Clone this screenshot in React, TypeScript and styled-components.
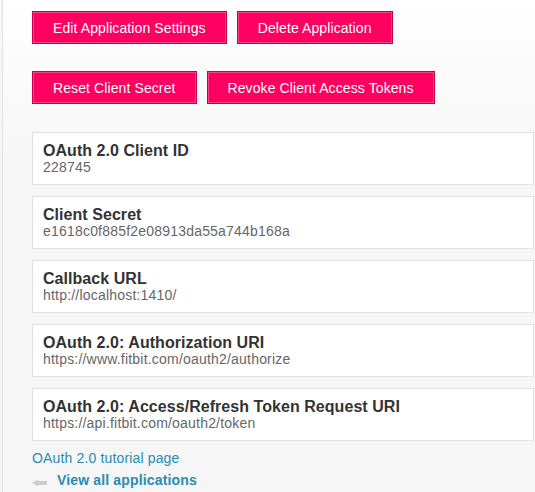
import styled, { createGlobalStyle } from "styled-components"

const GlobalStyle = createGlobalStyle`
    html, body {
        margin: 0;
        padding: 0;
        background: #f6f6f6;
    }
    body {
        font-family: "Liberation Sans", Arial, sans-serif;
    }
`
const Page = styled.div`
    min-height: 492px;
    margin-left: 2px;
    border-left: 1px solid #e2e2e2;
    padding: 11px 1px 0 29px;
    background: linear-gradient(#ffffff 0, #f6f6f6 160px);
    box-sizing: border-box;
`
const ButtonRow = styled.div<{ $last?: boolean }>`
    display: flex;
    gap: 10px;
    margin-bottom: ${props => (props.$last ? "0" : "27px")};
`
const PinkButton = styled.button`
    height: 33px;
    padding: 0 20px;
    background: #ff0060;
    border: 1px solid #c40048;
    box-shadow: inset 0 0 0 1px rgba(255, 255, 255, 0.25);
    color: #fff;
    font-family: "Liberation Sans", Arial, sans-serif;
    font-size: 14px;
    letter-spacing: 0.1px;
    cursor: pointer;
`
const CardList = styled.div`
    display: flex;
    flex-direction: column;
    gap: 11px;
    margin-top: 28px;
`
const Card = styled.div`
    background: #fff;
    border: 1px solid #e2e2e2;
    padding: 9px 10px;
`
const Label = styled.div`
    font-size: 16px;
    line-height: 18px;
    font-weight: bold;
    letter-spacing: 0.05px;
    color: #333;
`
const Value = styled.div`
    font-size: 14px;
    line-height: 15px;
    letter-spacing: 0.2px;
    color: #666;
`
const Links = styled.div`
    margin-top: 8px;
    display: flex;
    flex-direction: column;
    gap: 4px;
`
const TextLink = styled.a<{ $bold?: boolean }>`
    display: flex;
    align-items: center;
    gap: 10px;
    font-size: 14px;
    line-height: 18px;
    letter-spacing: 0.15px;
    font-weight: ${props => (props.$bold ? "bold" : "normal")};
    color: #2a8cb2;
    text-decoration: none;
`
const BackArrow = () => (
    <svg width="15" height="8" viewBox="0 0 15 8" style={{ marginTop: 5 }}>
        <path d="M0 4 L6 0.5 L6 2 L15 2 L15 6 L6 6 L6 7.5 Z" fill="#cccccc" />
    </svg>
)

const fields = [
    { label: "OAuth 2.0 Client ID", value: "228745" },
    { label: "Client Secret", value: "e1618c0f885f2e08913da55a744b168a" },
    { label: "Callback URL", value: "http://localhost:1410/" },
    { label: "OAuth 2.0: Authorization URI", value: "https://www.fitbit.com/oauth2/authorize" },
    { label: "OAuth 2.0: Access/Refresh Token Request URI", value: "https://api.fitbit.com/oauth2/token" },
]

function App() {
    return (
        <>
            <GlobalStyle />
            <Page>
                <ButtonRow>
                    <PinkButton>Edit Application Settings</PinkButton>
                    <PinkButton>Delete Application</PinkButton>
                </ButtonRow>
                <ButtonRow $last>
                    <PinkButton>Reset Client Secret</PinkButton>
                    <PinkButton>Revoke Client Access Tokens</PinkButton>
                </ButtonRow>
                <CardList>
                    {fields.map(f => (
                        <Card key={f.label}>
                            <Label>{f.label}</Label>
                            <Value>{f.value}</Value>
                        </Card>
                    ))}
                </CardList>
                <Links>
                    <TextLink href="#">OAuth 2.0 tutorial page</TextLink>
                    <TextLink href="#" $bold>
                        <BackArrow />
                        View all applications
                    </TextLink>
                </Links>
            </Page>
        </>
    )
}

export default App
